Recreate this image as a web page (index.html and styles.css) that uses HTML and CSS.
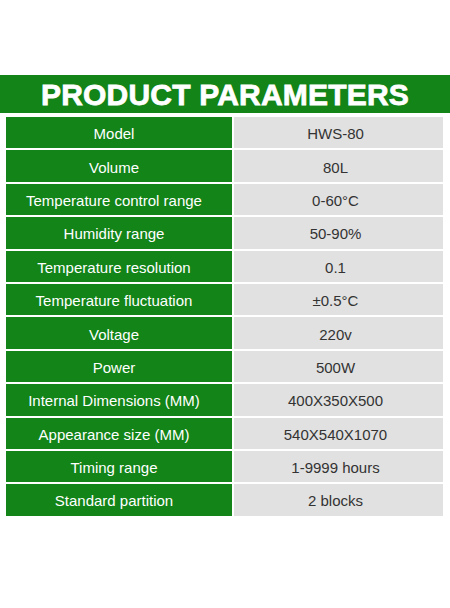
FILE: index.html
```html
<!DOCTYPE html>
<html lang="en">
<head>
  <meta charset="UTF-8">
  <meta name="viewport" content="width=device-width, initial-scale=1.0">
  <title>Product Parameters</title>
  <link rel="stylesheet" href="styles.css">
</head>
<body>
  <div class="page">
    <h1 class="banner">PRODUCT PARAMETERS</h1>

    <!-- parameter table -->
    <div class="params">
      <div class="key">Model</div><div class="val">HWS-80</div>
      <div class="key">Volume</div><div class="val">80L</div>
      <div class="key">Temperature control range</div><div class="val">0-60°C</div>
      <div class="key">Humidity range</div><div class="val">50-90%</div>
      <div class="key">Temperature resolution</div><div class="val">0.1</div>
      <div class="key">Temperature fluctuation</div><div class="val">±0.5°C</div>
      <div class="key">Voltage</div><div class="val">220v</div>
      <div class="key">Power</div><div class="val">500W</div>
      <div class="key">Internal Dimensions (MM)</div><div class="val">400X350X500</div>
      <div class="key">Appearance size (MM)</div><div class="val">540X540X1070</div>
      <div class="key">Timing range</div><div class="val">1-9999 hours</div>
      <div class="key">Standard partition</div><div class="val">2 blocks</div>
    </div>
  </div>
</body>
</html>
```

FILE: styles.css
```css
/* Global */
body {
  margin: 0;
  background: #ffffff;
  font-family: "Liberation Sans", Arial, sans-serif;
}

.page {
  padding-top: 75px;
}

/* Green title band */
.banner {
  margin: 0;
  height: 38px;
  background-color: #128418;
  color: #ffffff;
  font-size: 30px;
  font-weight: bold;
  line-height: 40px;
  text-align: center;
  -webkit-text-stroke: 0.8px #ffffff;
  letter-spacing: 0.2px;
}

/* Table */
.params {
  display: grid;
  grid-template-columns: 226px 209px;
  grid-auto-rows: 31.4px;
  column-gap: 2px;
  row-gap: 2px;
  margin: 4px 0 0 6px;
  font-size: 15px;
}

.key,
.val {
  display: flex;
  align-items: center;
  justify-content: center;
  padding-top: 2px;
}

.key {
  background-color: #128418;
  color: #ffffff;
  padding-right: 10px;
}

.val {
  background-color: #e1e1e1;
  color: #333333;
  padding-right: 6px;
}
```
